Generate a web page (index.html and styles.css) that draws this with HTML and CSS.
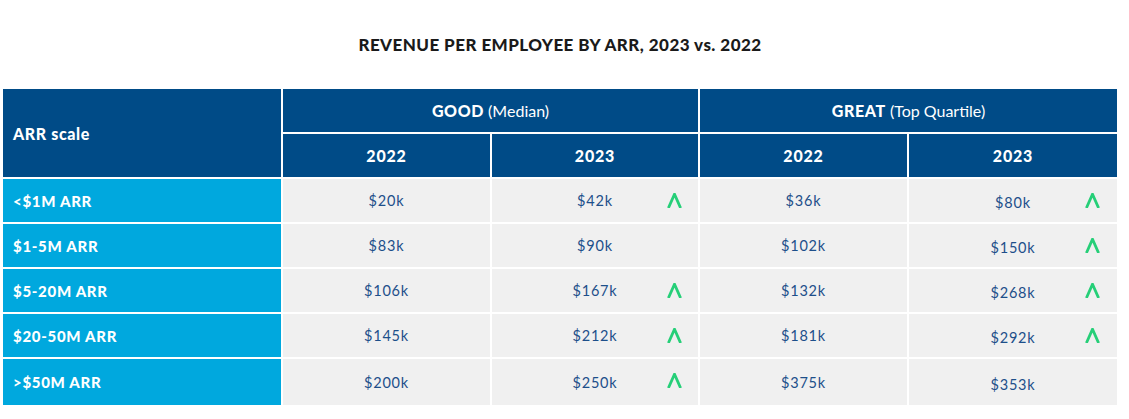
FILE: index.html
```html
<!DOCTYPE html>
<html lang="en">
<head>
<meta charset="utf-8">
<title>Revenue per employee by ARR</title>
<link rel="stylesheet" href="styles.css">
</head>
<body>
<div class="page">
  <h1 class="title">REVENUE PER EMPLOYEE BY ARR, 2023 vs. 2022</h1>
  <div class="table">
    <div class="hcell scale">ARR scale</div>
    <div class="hcell group good"><b>GOOD</b>&nbsp;(Median)</div>
    <div class="hcell group great"><b>GREAT</b>&nbsp;(Top Quartile)</div>
    <div class="hcell year">2022</div>
    <div class="hcell year">2023</div>
    <div class="hcell year">2022</div>
    <div class="hcell year">2023</div>

    <div class="label">&lt;$1M ARR</div>
    <div class="val">$20k</div>
    <div class="val">$42k<svg class="up" viewBox="0 0 15 15"><polyline points="1.4,15 7.5,1.2 13.6,15"/></svg></div>
    <div class="val">$36k</div>
    <div class="val last">$80k<svg class="up" viewBox="0 0 15 15"><polyline points="1.4,15 7.5,1.2 13.6,15"/></svg></div>

    <div class="label">$1-5M ARR</div>
    <div class="val">$83k</div>
    <div class="val">$90k</div>
    <div class="val">$102k</div>
    <div class="val last">$150k<svg class="up" viewBox="0 0 15 15"><polyline points="1.4,15 7.5,1.2 13.6,15"/></svg></div>

    <div class="label">$5-20M ARR</div>
    <div class="val">$106k</div>
    <div class="val">$167k<svg class="up" viewBox="0 0 15 15"><polyline points="1.4,15 7.5,1.2 13.6,15"/></svg></div>
    <div class="val">$132k</div>
    <div class="val last">$268k<svg class="up" viewBox="0 0 15 15"><polyline points="1.4,15 7.5,1.2 13.6,15"/></svg></div>

    <div class="label">$20-50M ARR</div>
    <div class="val">$145k</div>
    <div class="val">$212k<svg class="up" viewBox="0 0 15 15"><polyline points="1.4,15 7.5,1.2 13.6,15"/></svg></div>
    <div class="val">$181k</div>
    <div class="val last">$292k<svg class="up" viewBox="0 0 15 15"><polyline points="1.4,15 7.5,1.2 13.6,15"/></svg></div>

    <div class="label">&gt;$50M ARR</div>
    <div class="val">$200k</div>
    <div class="val">$250k<svg class="up" viewBox="0 0 15 15"><polyline points="1.4,15 7.5,1.2 13.6,15"/></svg></div>
    <div class="val">$375k</div>
    <div class="val last">$353k</div>
  </div>
</div>
</body>
</html>
```
FILE: styles.css
```css
html, body {
  margin: 0;
  padding: 0;
  background: #ffffff;
}

.page {
  width: 1129px;
  height: 419px;
  font-family: Lato, "Open Sans", sans-serif;
}

.title {
  margin: 0;
  height: 89px;
  display: flex;
  align-items: center;
  justify-content: center;
  font-size: 17px;
  font-weight: 900;
  letter-spacing: 0.45px;
  color: #1a1a1a;
  padding-left: 3px;
  width: 1114px;
  box-sizing: content-box;
}

.table {
  margin-left: 3px;
  display: grid;
  grid-template-columns: 278px 207px 206px 207px 208px;
  grid-template-rows: 43px 43px 43px 43px 43px 43px 46px;
  gap: 2px;
  background: #ffffff;
  width: 1114px;
}

.hcell {
  background: #004b87;
  color: #ffffff;
  display: flex;
  align-items: center;
  justify-content: center;
  font-size: 16px;
}

.hcell.scale {
  grid-row: 1 / span 2;
  justify-content: flex-start;
  padding-left: 10px;
  font-weight: 900;
  font-size: 16px;
  letter-spacing: 0.6px;
}

.hcell.group {
  grid-column: span 2;
  font-weight: 400;
}

.hcell.group b {
  font-weight: 900;
  letter-spacing: 0.6px;
}

.hcell.year {
  font-weight: 900;
  letter-spacing: 0.8px;
}

.label {
  background: #00a8de;
  color: #ffffff;
  display: flex;
  align-items: center;
  padding-left: 10px;
  font-size: 15px;
  font-weight: 900;
  letter-spacing: 0.7px;
}

.val {
  position: relative;
  background: #f0f0f0;
  color: #1d4f8a;
  display: flex;
  align-items: center;
  justify-content: center;
  font-size: 14.5px;
  letter-spacing: 0.8px;
}

.val.last {
  padding-top: 4px;
  box-sizing: border-box;
}

.up {
  position: absolute;
  left: calc(50% + 72px);
  top: 14px;
  width: 15px;
  height: 15px;
}

.up polyline {
  fill: none;
  stroke: #26cf78;
  stroke-width: 2.8;
  stroke-linejoin: miter;
}
```
